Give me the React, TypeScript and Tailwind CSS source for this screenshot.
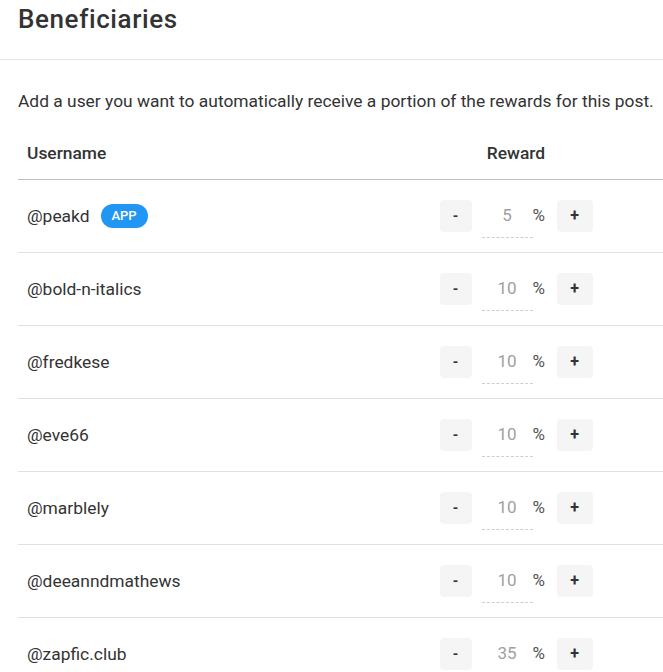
import React from "react";

const rows: { name: string; value: string; app?: boolean }[] = [
  { name: "@peakd", value: "5", app: true },
  { name: "@bold-n-italics", value: "10" },
  { name: "@fredkese", value: "10" },
  { name: "@eve66", value: "10" },
  { name: "@marblely", value: "10" },
  { name: "@deeanndmathews", value: "10" },
  { name: "@zapfic.club", value: "35" },
];

export default function App() {
  return (
    <div
      className="w-[663px] h-[672px] overflow-hidden bg-white text-[#333333]"
      style={{ fontFamily: "Roboto, 'Liberation Sans', sans-serif" }}
    >
      <div className="h-[60px] border-b border-[#e6e6e6] pl-[18px] pt-[1px]">
        <h2 className="text-[26px] leading-[36px] font-medium tracking-[0.6px] text-[#333333]">Beneficiaries</h2>
      </div>
      <div className="pl-[18px]">
        <p className="mt-[29px] text-[17.4px] leading-[24px] text-[#333333] whitespace-nowrap">
          Add a user you want to automatically receive a portion of the rewards for this post.
        </p>
        <div className="mt-[14px] w-[645px]">
          <div className="flex h-[53px] items-center border-b border-[#bdbdbd] text-[17.4px] font-medium">
            <div className="w-[351px] pl-[9px]">Username</div>
            <div className="w-[294px] text-center">Reward</div>
          </div>
          {rows.map((r) => (
            <div key={r.name} className="flex h-[73px] items-center border-b border-[#e0e0e0] text-[17.4px]">
              <div className="flex w-[351px] items-center gap-[11px] pl-[9px]">
                <span>{r.name}</span>
                {r.app && (
                  <span className="flex h-[24px] w-[47px] items-center justify-center rounded-full bg-[#2196f3] text-[13px] font-medium text-white">
                    APP
                  </span>
                )}
              </div>
              <div className="flex w-[294px] items-center justify-center text-[16px]">
                <div className="flex h-[32px] w-[32px] items-center justify-center rounded-[4px] bg-[#f5f5f5] text-[14px] font-bold text-[#333]">
                  -
                </div>
                <div className="relative ml-[10px] flex h-[32px] w-[51px] items-center justify-center text-[17px] text-[#a0a0a0]">
                  {r.value}
                  <div className="absolute bottom-[-6px] left-0 right-0 border-b border-dashed border-[#cfcfcf]" />
                </div>
                <div className="w-[12px] text-[17px] text-[#555]">%</div>
                <div className="ml-[12px] flex h-[32px] w-[36px] items-center justify-center rounded-[4px] bg-[#f5f5f5] text-[16px] font-bold text-[#333]">
                  +
                </div>
              </div>
            </div>
          ))}
        </div>
      </div>
    </div>
  );
}
